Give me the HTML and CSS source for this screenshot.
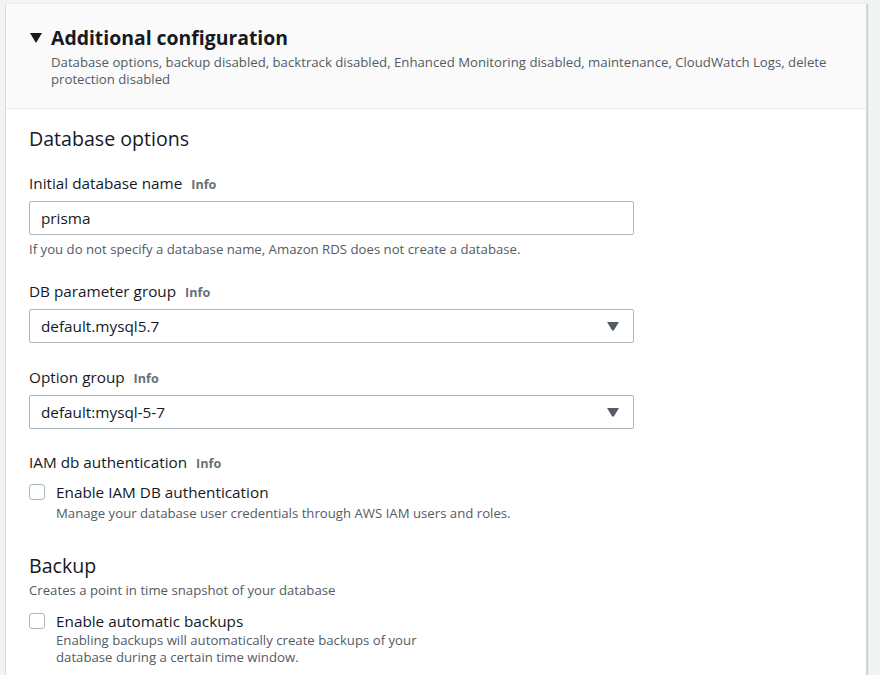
FILE: index.html
```html
<!DOCTYPE html>
<html lang="en">
<head>
<meta charset="utf-8">
<title>Additional configuration</title>
<link rel="stylesheet" href="styles.css">
</head>
<body>
<div class="page">
  <section class="panel">
    <header class="panel-header">
      <div class="title-row">
        <svg class="caret" width="12" height="10" viewBox="0 0 12 10"><path d="M0 0 H12 L6 10 Z" fill="#16191f"/></svg>
        <h2 class="title">Additional configuration</h2>
      </div>
      <p class="summary">Database options, backup disabled, backtrack disabled, Enhanced Monitoring disabled, maintenance, CloudWatch Logs, delete protection disabled</p>
    </header>
    <div class="panel-body">
      <h3 class="section-title">Database options</h3>

      <div class="field field-first">
        <div class="label">Initial database name <span class="info">Info</span></div>
        <div class="input">prisma</div>
        <div class="hint">If you do not specify a database name, Amazon RDS does not create a database.</div>
      </div>

      <div class="field">
        <div class="label">DB parameter group <span class="info">Info</span></div>
        <div class="input select">default.mysql5.7
          <svg class="arrow" width="12" height="9" viewBox="0 0 12 9"><path d="M0 0 H12 L6.8 8.5 H5.2 Z" fill="#545b64"/></svg>
        </div>
      </div>

      <div class="field field-wide">
        <div class="label">Option group <span class="info">Info</span></div>
        <div class="input select">default:mysql-5-7
          <svg class="arrow" width="12" height="9" viewBox="0 0 12 9"><path d="M0 0 H12 L6.8 8.5 H5.2 Z" fill="#545b64"/></svg>
        </div>
      </div>

      <div class="field">
        <div class="label">IAM db authentication <span class="info">Info</span></div>
        <div class="check-row">
          <span class="checkbox"></span>
          <div class="check-text">
            <div class="check-label">Enable IAM DB authentication</div>
            <div class="check-desc">Manage your database user credentials through AWS IAM users and roles.</div>
          </div>
        </div>
      </div>

      <h3 class="section-title backup-title">Backup</h3>
      <div class="section-desc">Creates a point in time snapshot of your database</div>
      <div class="check-row check-row-backup">
        <span class="checkbox"></span>
        <div class="check-text">
          <div class="check-label">Enable automatic backups</div>
          <div class="check-desc multi">Enabling backups will automatically create backups of your<br>database during a certain time window.</div>
        </div>
      </div>
    </div>
  </section>
</div>
</body>
</html>
```

FILE: styles.css
```css
* { box-sizing: border-box; }
html, body { margin: 0; padding: 0; }
body {
  background: #f2f3f3;
  font-family: "Open Sans", "Noto Sans", sans-serif;
  color: #16191f;
  height: 675px;
  overflow: hidden;
}
.page {
  padding: 4px 13px 0 5px;
}
.panel {
  background: #fff;
  border-left: 1px solid #d5dbdb;
  border-right: 1px solid #d5dbdb;
  box-shadow: 1px 0 1px rgba(0,22,40,0.15);
  height: 700px;
}
.panel-header {
  background: #fafafa;
  border-bottom: 1px solid #eaeded;
  padding: 20px 20px 0 24px;
  height: 105px;
}
.title-row {
  display: flex;
  align-items: center;
  gap: 9px;
}
.caret { flex: none; }
.title {
  margin: 0;
  font-size: 19.4px;
  line-height: 28px;
  font-weight: 700;
}
.summary {
  margin: 2px 0 0 21px;
  font-size: 13.2px;
  line-height: 17px;
  color: #545b64;
}
.panel-body {
  padding: 18px 23px 0 23px;
}
.section-title {
  margin: 0;
  font-size: 19.6px;
  line-height: 24px;
  font-weight: 400;
}
.field { margin-top: 23px; }
.field-first { margin-top: 22px; }
.field-wide { margin-top: 24px; }
.label {
  font-size: 15.3px;
  line-height: 20px;
}
.info {
  font-size: 12.6px;
  font-weight: 700;
  color: #687078;
  margin-left: 5px;
}
.input {
  margin-top: 6px;
  width: 605px;
  height: 34px;
  border: 1px solid #aab7b8;
  border-radius: 2px;
  padding: 0 11px;
  font-size: 15.3px;
  line-height: 32px;
  display: flex;
  align-items: center;
  justify-content: space-between;
}
.select { padding-right: 14px; }
.arrow { flex: none; }
.hint {
  margin-top: 5px;
  font-size: 13.2px;
  line-height: 18px;
  color: #545b64;
}
.check-row {
  display: flex;
  gap: 11px;
  margin-top: 8px;
}
.checkbox {
  flex: none;
  width: 16px;
  height: 16px;
  border: 1px solid #aab7b8;
  border-radius: 3px;
  margin-top: 2px;
  background: #fff;
}
.check-label {
  font-size: 15.3px;
  line-height: 20px;
}
.check-desc {
  margin-top: 2px;
  font-size: 13.2px;
  line-height: 18px;
  color: #545b64;
}
.check-desc.multi { line-height: 17px; margin-top: 1px; }
.backup-title { margin-top: 32px; }
.section-desc {
  margin-top: 3px;
  font-size: 13.2px;
  line-height: 18px;
  color: #545b64;
}
.check-row-backup { margin-top: 12px; }
```
